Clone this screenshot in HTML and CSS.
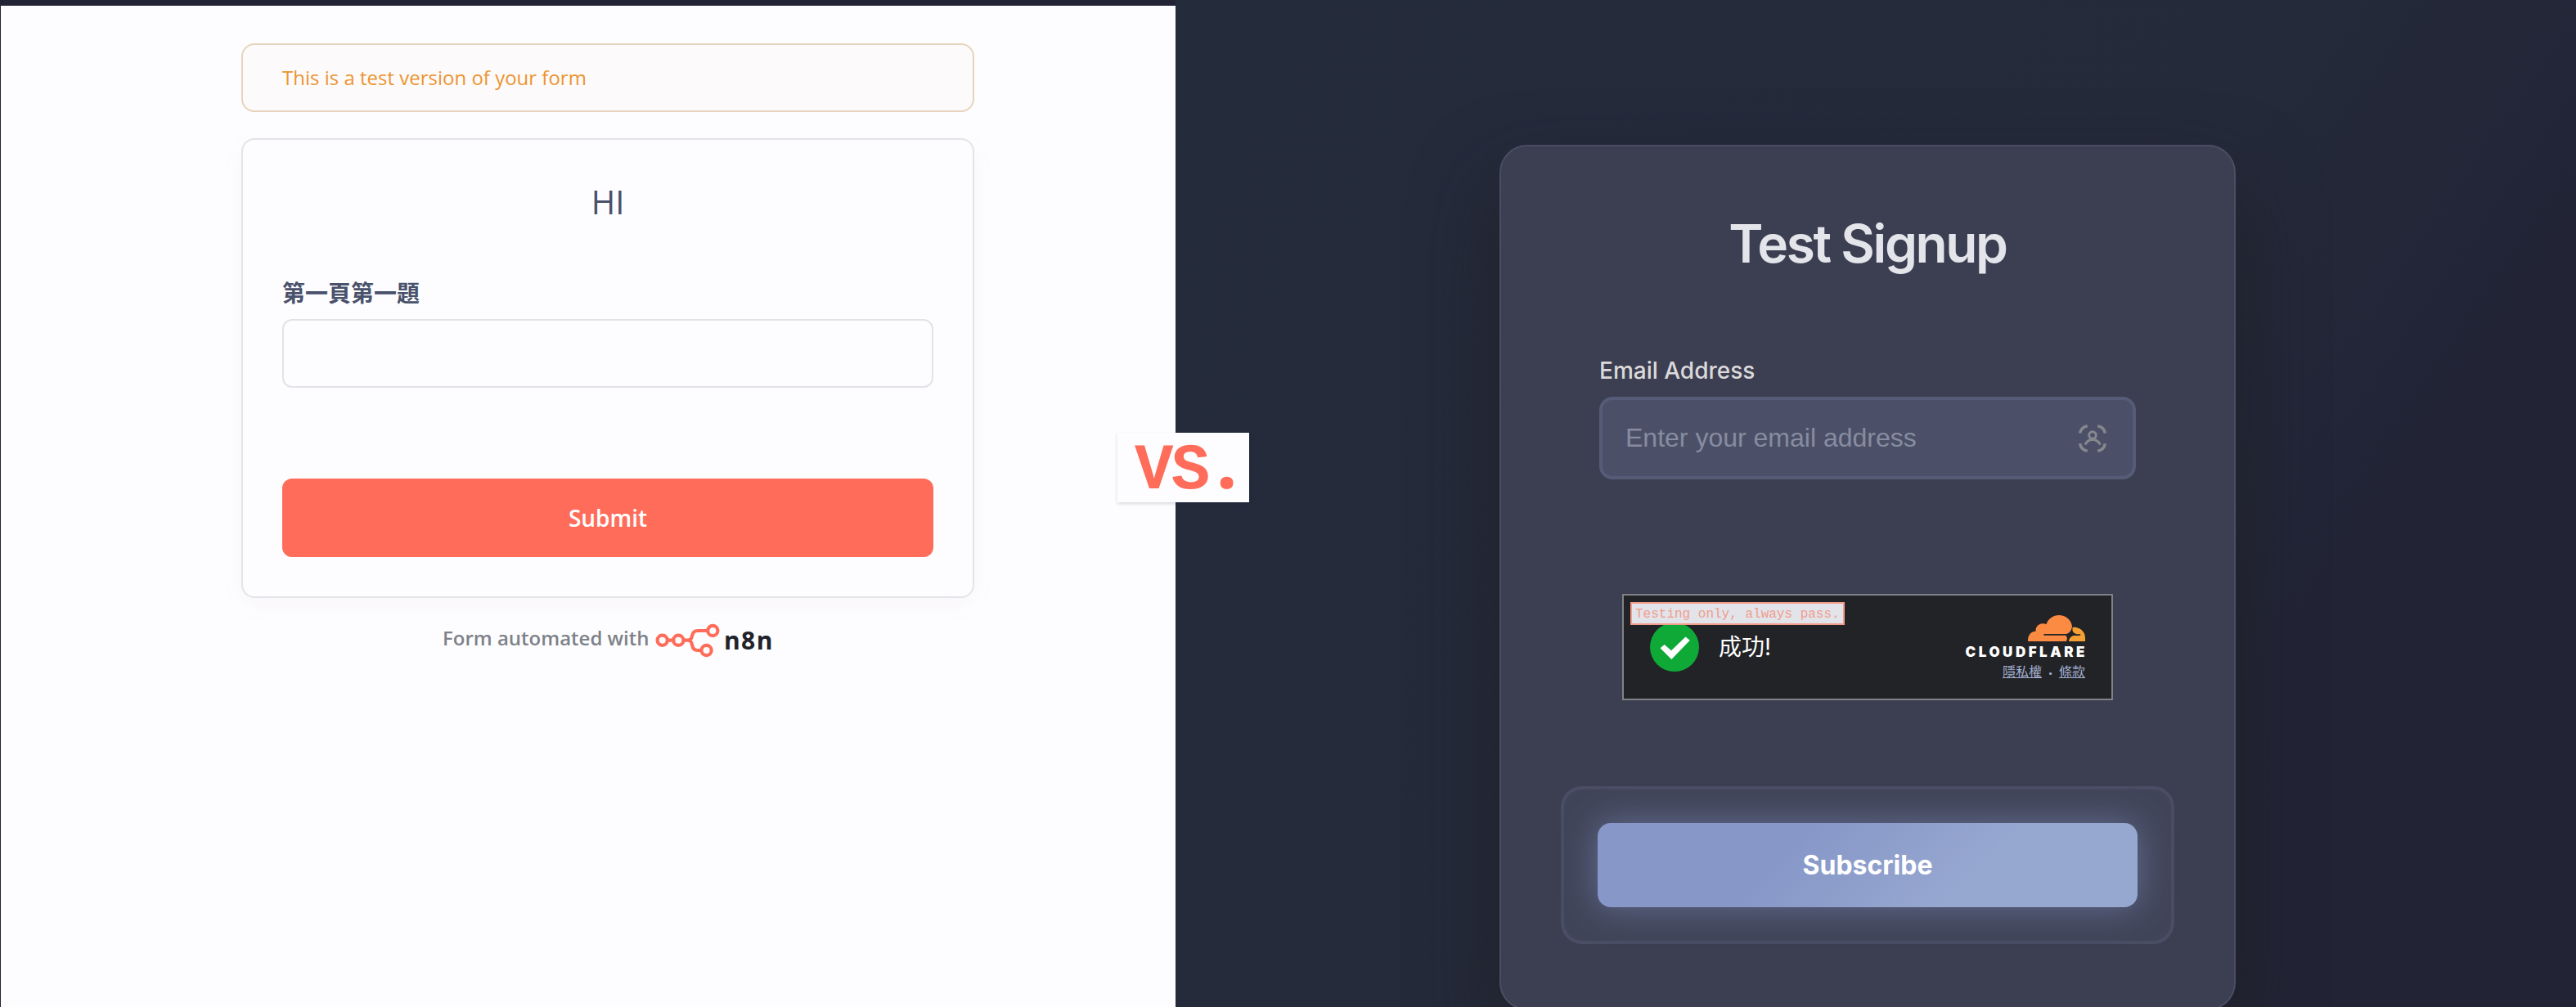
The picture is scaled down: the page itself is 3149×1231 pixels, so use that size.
FILE: index.html
```html
<!DOCTYPE html>
<html lang="zh-Hant">
<head>
<meta charset="utf-8">
<title>Form comparison</title>
<link rel="stylesheet" href="styles.css">
</head>
<body>
<main class="compare">
  <section class="light">
    <div class="notice">This is a test version of your form</div>
    <form class="form-card">
      <h1 class="form-title">HI</h1>
      <label class="form-label">第一頁第一題</label>
      <div class="form-input"></div>
      <button class="form-submit" type="button">Submit</button>
    </form>
    <footer class="credit">
      <span class="credit-text">Form automated with</span>
      <svg class="n8n-mark" width="80" height="44" viewBox="0 0 80 44" fill="none" stroke="#ff6d5a" stroke-width="4.2">
        <circle cx="9.7" cy="22.7" r="6.1"/>
        <circle cx="29.3" cy="22.7" r="6.1"/>
        <circle cx="71.3" cy="11" r="6.1"/>
        <circle cx="63.6" cy="35" r="6.1"/>
        <path d="M15.800 22.700h7.400M35.400 22.700h5c4 0 5-2 5.700-5.700s2.600-6 6.800-6h12.300M40.400 22.700c4 0 5 2 5.700 6s2.600 6.300 6.400 6.300h5"/>
      </svg>
      <span class="n8n-name">n8n</span>
    </footer>
  </section>

  <section class="dark">
    <div class="signup">
      <h2 class="signup-title">Test Signup</h2>
      <div class="field">
        <label class="field-label">Email Address</label>
        <div class="field-input">
          <span class="placeholder">Enter your email address</span>
          <svg class="autofill" width="36" height="36" viewBox="0 0 36 36" fill="none" stroke="#85888d" stroke-width="3.6">
            <path d="M2.600 11.500Q4 4 11.700 2.700M24.300 2.700Q32 4 33.400 11.500M33.400 24.300Q32 32 24.300 33.300M11.700 33.300Q4 32 2.600 24.300"/>
            <circle cx="18" cy="14" r="4.300" stroke-width="3"/>
            <path d="M9 25.500Q12 19.500 18 19.300Q24 19.500 27.500 25.500" stroke-width="3"/>
          </svg>
        </div>
      </div>
      <div class="captcha">
        <span class="captcha-test">Testing only, always pass.</span>
        <div class="captcha-state">
          <svg width="60" height="60" viewBox="0 0 60 60">
            <circle cx="30" cy="30" r="30" fill="#0fa938"/>
            <path d="M12.600 31.300l5.100-4.300 8.300 7.200 17.500-16.700 5.300 4.300L26.300 45z" fill="#fff"/>
          </svg>
          <span class="captcha-text">成功!</span>
        </div>
        <div class="cf">
          <svg class="cf-cloud" width="70" height="32" viewBox="0 0 70 32">
            <path fill="#fb8a42" d="M0 32C-.3 24.500 3.500 20 9.500 19.700 9 13 15 8.500 22.500 11 25 4 31 0 38 0c8.500 0 15 6 16 13.500-.5 5-3 8.500-7 9.500H21c-2.500 0-2.500 1.800 0 1.800h25c2 1.500 2.500 4.500 1 7.200z"/>
            <path fill="#f59f35" d="M54.500 15C62 14 70 19 70 28v4H50c.5-4 3-6.500 6-7h7c2 0 2-1.800 0-1.800h-3.500c-3-1-5-3-5-5z"/>
          </svg>
          <span class="cf-name">CLOUDFLARE</span>
          <span class="cf-links"><u>隱私權</u><span class="sep">•</span><u>條款</u></span>
        </div>
      </div>
      <div class="submit-frame">
        <button class="subscribe" type="button">Subscribe</button>
      </div>
    </div>
  </section>
  <div class="versus">VS<span class="versus-dot">.</span></div>
</main>
</body>
</html>
```
FILE: styles.css
```css
* { box-sizing: border-box; }

body {
  margin: 0;
  overflow: hidden;
  background: #222435;
}

h1, h2 { margin: 0; }

button { border: 0; padding: 0; }

.compare {
  position: relative;
  display: flex;
  width: 3149px;
  height: 1231px;
  overflow: hidden;
}

/* n8n form */
.light {
  width: 1436px;
  margin: 7px 0 0 1px;
  padding: 46px 246px 0 294px;
  background: #fdfdff;
  font-family: "Open Sans", "Noto Sans CJK TC", sans-serif;
}

.notice {
  height: 84px;
  padding: 0 48px;
  border: 2px solid #e8d3bc;
  border-radius: 16px;
  background: #fcfafb;
  color: #ec9430;
  font-size: 24px;
  line-height: 80px;
}

.form-card {
  display: flex;
  flex-direction: column;
  height: 562px;
  margin-top: 32px;
  padding: 46px 48px 48px;
  border: 2px solid #e2e4e9;
  border-radius: 16px;
  background: #fdfdff;
  box-shadow: 0 8px 32px rgba(150, 80, 60, 0.04);
}

.form-title {
  color: #49516b;
  font-size: 40px;
  font-weight: 400;
  line-height: 60px;
  text-align: center;
}

.form-label {
  margin-top: 60px;
  color: #49516b;
  font-size: 28px;
  font-weight: 700;
  line-height: 42px;
}

.form-input {
  height: 84px;
  margin-top: 11px;
  border: 2px solid #e2e3e8;
  border-radius: 12px;
}

.form-submit {
  height: 96px;
  margin-top: 111px;
  border-radius: 12px;
  background: #ff6c5a;
  color: #fff;
  font: 600 28px/96px "Open Sans", sans-serif;
}

.credit {
  display: flex;
  align-items: center;
  height: 44px;
  margin: 29px 0 0 246px;
}

.credit-text {
  width: 259px;
  margin-top: -6px;
  color: #7e8289;
  font-size: 24px;
  font-weight: 600;
  white-space: nowrap;
}

.n8n-name {
  margin: 1px 0 0 5px;
  color: #20232a;
  font-size: 30px;
  font-weight: 700;
  line-height: 40px;
  letter-spacing: 1.4px;
}

/* Signup page */
.dark {
  flex: 1;
  padding: 177px 416px 0 396px;
  background: linear-gradient(125deg, #242b3b 0%, #242a3a 55%, #222436 74%, #222435 100%);
  font-family: Inter, "Noto Sans CJK TC", sans-serif;
}

.signup {
  display: flex;
  flex-direction: column;
  height: 1058px;
  padding: 79px 73px 0;
  border: 2px solid #4a4e64;
  border-radius: 34px;
  background: #3b3f51;
  box-shadow: 0 50px 100px rgba(32, 30, 34, 0.7);
}

.signup-title {
  color: #e3e5ea;
  font-size: 64px;
  font-weight: 600;
  line-height: 80px;
  letter-spacing: -2.4px;
  text-align: center;
}

.field { margin: 95px 47px 0; }

.field-label {
  display: block;
  color: #dcd9da;
  font-size: 28px;
  font-weight: 500;
  line-height: 40px;
}

.field-input {
  display: flex;
  align-items: center;
  justify-content: space-between;
  height: 101px;
  margin-top: 12px;
  padding: 0 31px 0 28px;
  border: 4px solid #565c78;
  border-radius: 16px;
  background: #4b5068;
}

.placeholder {
  margin-top: -2px;
  color: #878ca0;
  font: 32px/40px "Liberation Sans", sans-serif;
}

.captcha {
  position: relative;
  display: flex;
  justify-content: space-between;
  width: 600px;
  height: 130px;
  margin: 140px 75px 0;
  padding: 24px 32px 0;
  border: 2px solid #808286;
  background: #222327;
}

.captcha-test {
  position: absolute;
  top: 8px;
  left: 8px;
  width: 262px;
  height: 28px;
  padding-left: 4px;
  border: 2px solid #f29c8c;
  background: #e2e4ea;
  color: #f09c8c;
  font: 16px/26px "Liberation Mono", monospace;
  white-space: nowrap;
}

.captcha-state {
  display: flex;
  align-items: center;
  gap: 24px;
  height: 60px;
  margin-top: 9px;
}

.captcha-text {
  color: #fff;
  font-size: 28px;
  line-height: 40px;
}

.cf {
  display: flex;
  flex-direction: column;
  align-items: flex-end;
}

.cf-name {
  margin: 5px -3px 0 0;
  color: #fff;
  font-size: 17px;
  font-weight: 900;
  line-height: 16px;
  letter-spacing: 3.5px;
}

.cf-links {
  margin-top: 3px;
  color: #a3afd0;
  font-size: 16px;
  line-height: 26px;
}

.sep {
  display: inline-block;
  width: 21px;
  font-size: 10px;
  text-align: center;
  vertical-align: 1px;
}

.submit-frame {
  height: 193px;
  margin-top: 105px;
  padding: 41px;
  border: 4px solid #494e65;
  border-radius: 26px;
  background: #41455a;
}

.subscribe {
  width: 100%;
  height: 103px;
  border-radius: 16px;
  background: linear-gradient(135deg, #8797c8 0%, #8797c8 35%, #96a7d0 68%, #96a7d0 100%);
  box-shadow: 0 0 40px rgba(135, 151, 200, 0.5);
  color: #fff;
  font: 700 32px/101px Inter, sans-serif;
}

/* Badge over the seam between both pages */
.versus {
  position: absolute;
  top: 529px;
  left: 1366px;
  width: 161px;
  height: 85px;
  padding-left: 21px;
  background: #fdfdff;
  box-shadow: 0 2px 4px rgba(30, 30, 60, 0.16);
  color: #ff6c5a;
  font: 700 79px/94px "Liberation Mono", monospace;
  letter-spacing: -2.6px;
  white-space: nowrap;
}

.versus-dot {
  display: inline-block;
  width: 46px;
  font-family: "Open Sans", sans-serif;
  font-size: 92px;
  line-height: 60px;
  letter-spacing: 0;
  text-align: center;
}
```
